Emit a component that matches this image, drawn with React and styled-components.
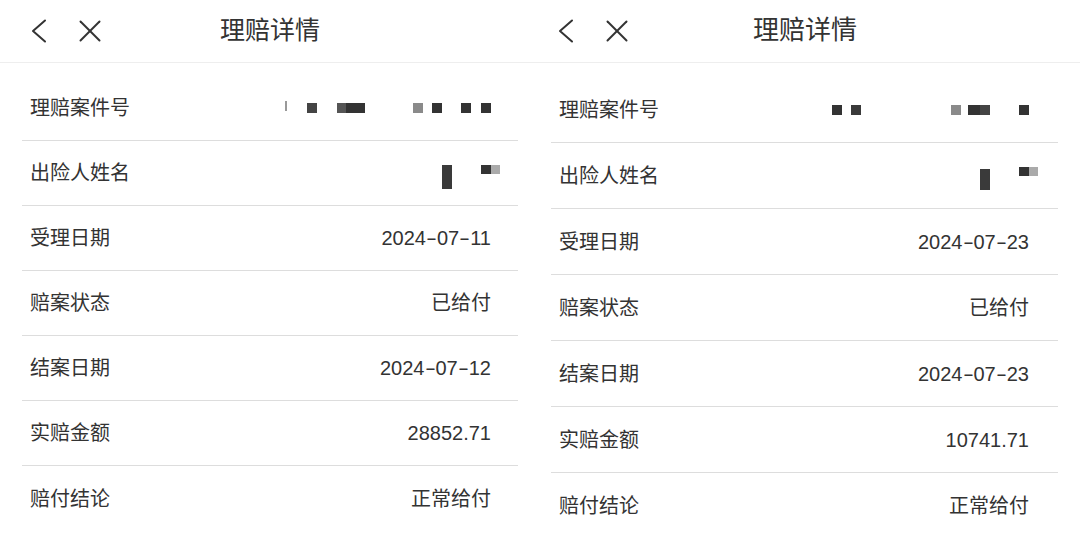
import styled, {createGlobalStyle} from "styled-components"

const GlobalStyle = createGlobalStyle`
	html, body {
		margin: 0;
		padding: 0;
		background: #fff;
	}
	body {
		font-family: "Liberation Sans", "Noto Sans CJK SC", sans-serif;
		color: #333;
	}
`

// two screenshots glued side by side, right one is a touch bigger
const panels = [
	{
		w: 530, titlePad: 10, navPad: 21, titleSize: 25, rowH: 65, gap: 13,
		listMl: 22, listMr: 12, rowPr: 27,
		rows: [
			{label: "理赔案件号", mask: [
				{ml: 0, w: 2, h: 10, c: "#999", dy: -2},
				{ml: 20, w: 10, h: 10, c: "#444"},
				{ml: 20, w: 9, h: 10, c: "#555"},
				{ml: 0, w: 19, h: 10, c: "#333"},
				{ml: 48, w: 10, h: 10, c: "#8a8a8a"},
				{ml: 9, w: 10, h: 10, c: "#333"},
				{ml: 19, w: 10, h: 10, c: "#333"},
				{ml: 10, w: 10, h: 10, c: "#333"},
			]},
			{label: "出险人姓名", mr: -9, mask: [
				{ml: 0, w: 10, h: 24, c: "#3a3a3a", dy: 4},
				{ml: 29, w: 10, h: 9, c: "#333", dy: -4},
				{ml: 0, w: 9, h: 9, c: "#aaa", dy: -4},
			]},
			{label: "受理日期", value: "2024-07-11"},
			{label: "赔案状态", value: "已给付"},
			{label: "结案日期", value: "2024-07-12"},
			{label: "实赔金额", value: "28852.71"},
			{label: "赔付结论", value: "正常给付"},
		],
	},
	{
		w: 550, titlePad: 0, navPad: 28, titleSize: 26, rowH: 66, gap: 14,
		listMl: 21, listMr: 22, rowPr: 29,
		rows: [
			{label: "理赔案件号", mask: [
				{ml: 0, w: 10, h: 10, c: "#333"},
				{ml: 9, w: 10, h: 10, c: "#3a3a3a"},
				{ml: 90, w: 10, h: 10, c: "#8a8a8a"},
				{ml: 7, w: 12, h: 10, c: "#333"},
				{ml: 0, w: 10, h: 10, c: "#444"},
				{ml: 29, w: 10, h: 10, c: "#333"},
			]},
			{label: "出险人姓名", mr: -9, mask: [
				{ml: 0, w: 10, h: 21, c: "#3a3a3a", dy: 4},
				{ml: 29, w: 10, h: 9, c: "#333", dy: -4},
				{ml: 0, w: 9, h: 9, c: "#aaa", dy: -4},
			]},
			{label: "受理日期", value: "2024-07-23"},
			{label: "赔案状态", value: "已给付"},
			{label: "结案日期", value: "2024-07-23"},
			{label: "实赔金额", value: "10741.71"},
			{label: "赔付结论", value: "正常给付"},
		],
	},
]

const Page = styled.div`
	display: flex;
	width: 1080px;
	height: 541px;
	overflow: hidden;
	background: #fff;
`

const Panel = styled.section`
	width: ${p => p.$w}px;
	flex: none;
`

const Header = styled.header`
	height: 62px;
	display: grid;
	grid-template-columns: 1fr auto 1fr;
	align-items: center;
	padding-left: ${p => p.$pad}px;
	border-bottom: 1px solid #eeeeee;
`

const Nav = styled.div`
	display: flex;
	align-items: center;
	gap: 32px;
	margin-left: ${p => p.$pad}px;
	color: #333;
`

const Title = styled.h1`
	margin: 0;
	font-size: ${p => p.$size}px;
	font-weight: 400;
	line-height: 1;
	color: #333;
	padding-bottom: 2px;
`

const List = styled.div`
	margin: ${p => p.$gap}px ${p => p.$mr}px 0 ${p => p.$ml}px;
`

const Row = styled.div`
	box-sizing: border-box;
	height: ${p => p.$h}px;
	display: flex;
	align-items: center;
	justify-content: space-between;
	padding: 0 ${p => p.$pr}px 0 8px;
	border-bottom: 1px solid #dddddd;
	&:last-child {
		border-bottom: none;
	}
`

const Label = styled.span`
	font-size: 20px;
	line-height: 1;
	color: #333;
`

const Value = styled.span`
	font-size: 20px;
	line-height: 1;
	color: #333;
	white-space: nowrap;
`

// phone font draws the hyphen long, like an en dash
const Dash = styled.span`
	display: inline-block;
	width: 11px;
	text-align: center;
	transform: scaleX(1.65);
`

const Mask = styled.span`
	display: flex;
	align-items: center;
	margin-right: ${p => p.$mr || 0}px;
`

const Block = styled.span`
	display: block;
	width: ${p => p.$w}px;
	height: ${p => p.$h}px;
	margin-left: ${p => p.$ml}px;
	background: ${p => p.$c};
	transform: translateY(${p => p.$dy || 0}px);
`

function Back() {
	return (
		<svg width="16" height="24" viewBox="0 0 16 24" fill="none" stroke="currentColor" strokeWidth="2" strokeLinecap="round" strokeLinejoin="round">
			<polyline points="14,1.5 2,12 14,22.5" />
		</svg>
	)
}

function Close() {
	return (
		<svg width="22" height="22" viewBox="0 0 22 22" fill="none" stroke="currentColor" strokeWidth="2" strokeLinecap="round">
			<line x1="1.5" y1="1.5" x2="20.5" y2="20.5" />
			<line x1="20.5" y1="1.5" x2="1.5" y2="20.5" />
		</svg>
	)
}

function ShowValue({text}) {
	const parts = text.split("-")
	return (
		<Value>
			{parts.map((p, i) => (
				<span key={i}>{i > 0 && <Dash>-</Dash>}{p}</span>
			))}
		</Value>
	)
}

export default function App() {
	return (
		<>
			<GlobalStyle />
			<Page>
				{panels.map((p, i) => (
					<Panel key={i} $w={p.w}>
						<Header $pad={p.titlePad}>
							<Nav $pad={p.navPad}>
								<Back />
								<Close />
							</Nav>
							<Title $size={p.titleSize}>理赔详情</Title>
							<span />
						</Header>
						<List $gap={p.gap} $ml={p.listMl} $mr={p.listMr}>
							{p.rows.map((r, j) => (
								<Row key={j} $h={p.rowH} $pr={p.rowPr}>
									<Label>{r.label}</Label>
									{r.mask ? (
										<Mask $mr={r.mr}>
											{r.mask.map((b, k) => (
												<Block key={k} $w={b.w} $h={b.h} $c={b.c} $ml={b.ml} $dy={b.dy} />
											))}
										</Mask>
									) : (
										<ShowValue text={r.value} />
									)}
								</Row>
							))}
						</List>
					</Panel>
				))}
			</Page>
		</>
	)
}
